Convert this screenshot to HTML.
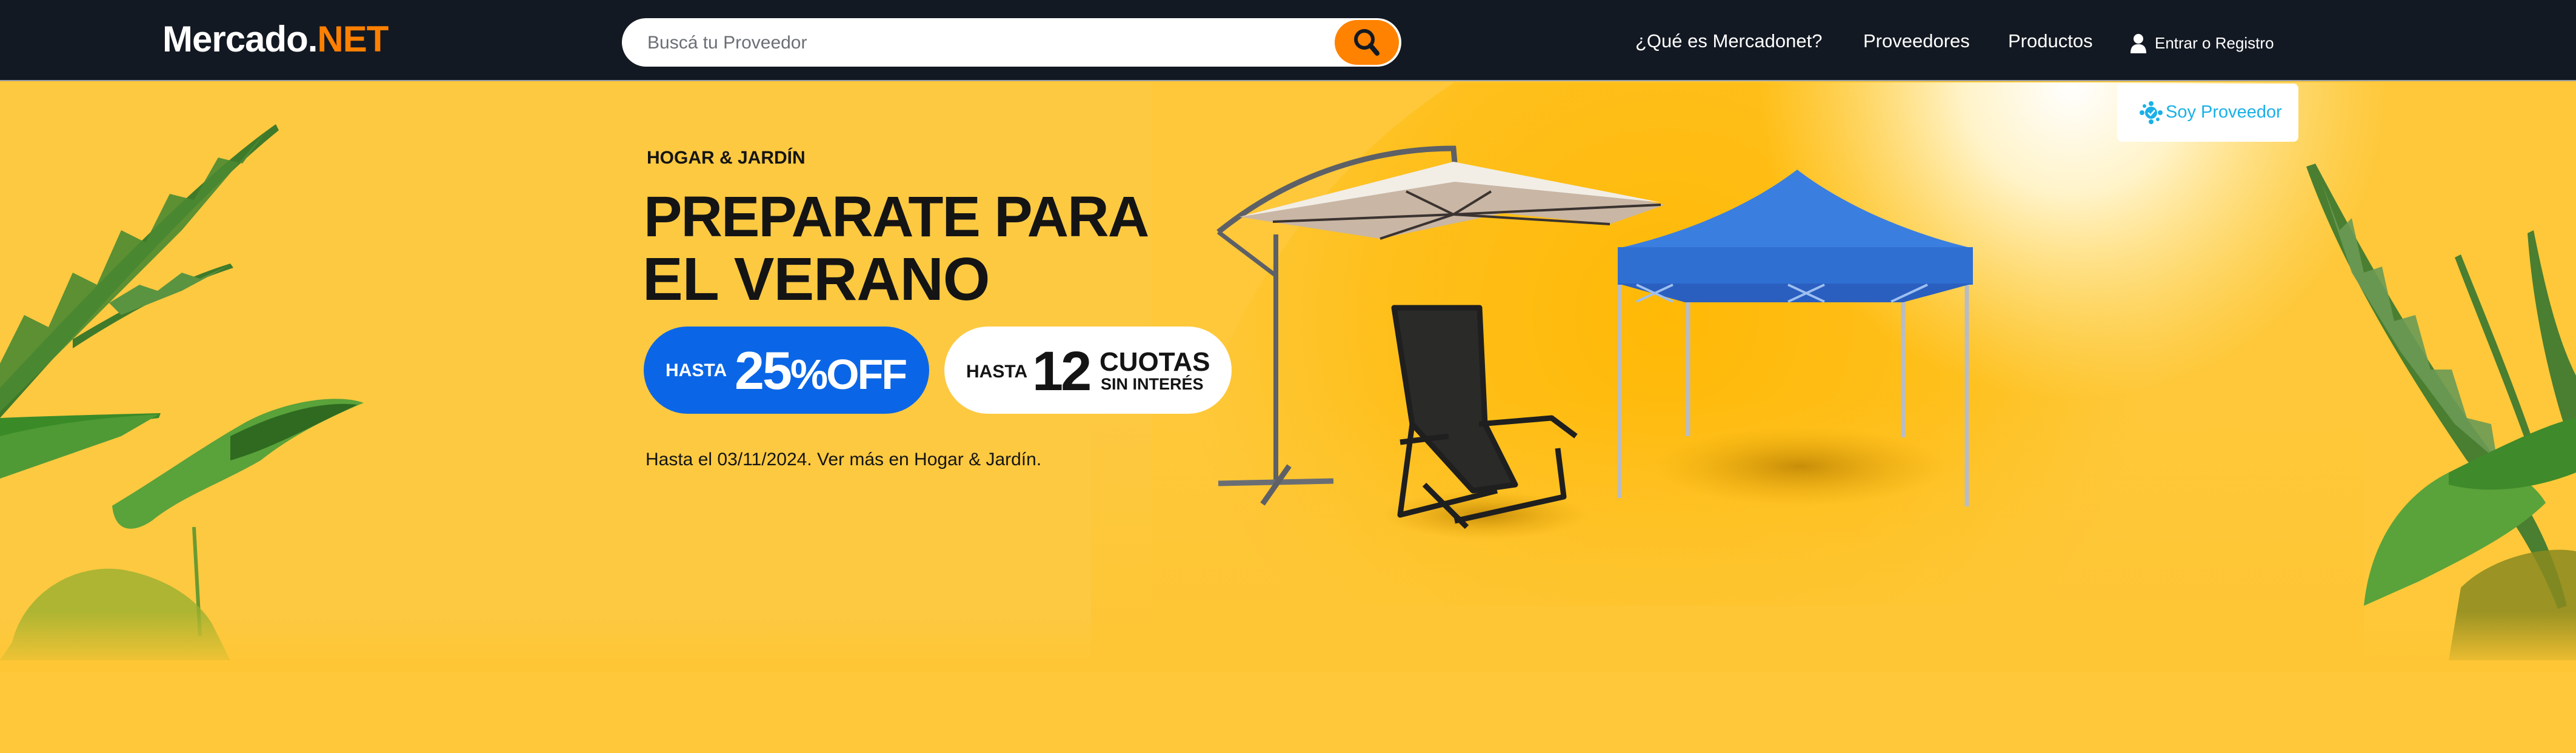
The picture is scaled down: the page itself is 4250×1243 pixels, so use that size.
<!DOCTYPE html>
<html><head><meta charset="utf-8"><style>
*{margin:0;padding:0;box-sizing:border-box}
body{width:4250px;height:1243px;overflow:hidden;background:#fec634;font-family:"Liberation Sans",sans-serif;position:relative}
.hdr{position:absolute;left:0;top:0;width:4250px;height:134px;background:#131922;border-bottom:2px solid #9aa0a6}
.logo{position:absolute;left:268px;top:30px;font-size:60px;font-weight:bold;color:#fff;letter-spacing:-1px}
.logo span{color:#ff8000}
.search{position:absolute;left:1026px;top:30px;width:1286px;height:80px;background:#fff;border-radius:40px}
.search .ph{position:absolute;left:42px;top:24px;font-size:30px;color:#6b6f75}
.search .btn{position:absolute;right:4px;top:3px;width:106px;height:74px;background:#ff8200;border-radius:37px}
.nav{position:absolute;top:50px;font-size:31px;color:#fff}
.ban{position:absolute;left:0;top:136px;width:4250px;height:1107px}
.t{position:absolute;color:#141414;font-weight:bold;white-space:nowrap}
.pill{position:absolute;top:539px;height:144px;border-radius:72px}
.soy{position:absolute;left:3493px;top:138px;width:299px;height:96px;background:#fff;border-radius:8px;color:#1ab0e8;font-size:29px}
</style></head><body>
<div class="ban">
<svg width="4250" height="1107" viewBox="0 136 4250 1107" style="position:absolute;left:0;top:0">
<defs>
<radialGradient id="g1" cx="2750" cy="520" r="800" gradientUnits="userSpaceOnUse"><stop offset="0" stop-color="#ffb700" stop-opacity=".9"/><stop offset=".6" stop-color="#ffba08" stop-opacity=".6"/><stop offset="1" stop-color="#ffbe10" stop-opacity="0"/></radialGradient>
<radialGradient id="g2" cx="3420" cy="140" r="520" gradientUnits="userSpaceOnUse"><stop offset="0" stop-color="#ffffff"/><stop offset=".35" stop-color="#fff3c8"/><stop offset="1" stop-color="#ffe58a" stop-opacity="0"/></radialGradient>
<radialGradient id="sh" cx="0.5" cy="0.5" r="0.5"><stop offset="0" stop-color="#b07800" stop-opacity=".7"/><stop offset="1" stop-color="#d89a00" stop-opacity="0"/></radialGradient>
<linearGradient id="fade" x1="0" y1="0" x2="0" y2="1"><stop offset="0" stop-color="#fec634" stop-opacity="0"/><stop offset="1" stop-color="#fec634"/></linearGradient>
<linearGradient id="vf" x1="0" y1="0" x2="0" y2="1"><stop offset="0" stop-color="#fec634" stop-opacity="0"/><stop offset=".55" stop-color="#fec634" stop-opacity="0"/><stop offset="1" stop-color="#fec634"/></linearGradient>
</defs>
<rect x="0" y="136" width="4250" height="1107" fill="#fec83a"/>
<rect x="0" y="136" width="1900" height="950" fill="#fdc941"/>
<path d="M1900 1000 C1950 650 2100 330 2400 136 L3700 136 C3800 400 3800 700 3700 1000 Z" fill="url(#g1)"/>
<rect x="1800" y="136" width="2100" height="950" fill="url(#vf)"/>
<rect x="2800" y="136" width="1300" height="900" fill="url(#g2)"/>
<!-- left plants -->
<g fill="#3f7a2a">
<path d="M0 640 C150 480 320 300 455 205 L460 215 C330 320 170 500 0 690 Z"/>
<path d="M0 600 L40 520 L80 540 L120 450 L160 470 L200 380 L240 400 L280 320 L320 330 L360 260 L400 270 L440 215 L300 380 L200 480 L100 580 L0 680Z" fill="#4a8a32" opacity=".9"/>
<path d="M120 560 C220 500 300 460 380 435 L385 442 C300 470 220 510 120 575Z"/>
<path d="M180 500 L230 470 L260 480 L300 450 L330 460 L380 437 L300 480 L200 520Z" fill="#5a9440"/>
<path d="M0 690 C100 686 180 684 265 682 L262 690 C180 700 90 720 0 740Z" fill="#3a8a28"/>
<path d="M0 720 C80 700 160 690 262 684 L200 720 L0 790Z" fill="#4f9a35"/>
</g>
<path d="M185 835 C260 790 330 740 400 700 C470 660 560 650 600 665 C540 690 480 720 430 760 C360 800 300 820 250 860 C220 880 190 880 185 835Z" fill="#5aa23a"/>
<path d="M380 720 C440 690 520 660 590 668 C520 700 450 740 380 760Z" fill="#2f6a20"/>
<path d="M320 870 L330 1050" stroke="#6a9a30" stroke-width="6"/>
<path d="M20 1060 C40 980 120 930 200 940 C260 950 320 980 350 1030 L380 1090 L0 1090Z" fill="#9ab030" opacity=".8"/>
<!-- right plants -->
<g fill="#4a7e30">
<path d="M3820 270 C3900 420 4000 600 4120 760 C4170 830 4210 900 4235 1000 L4220 1005 C4180 900 4120 820 4070 760 C3960 600 3860 430 3805 275Z"/>
<path d="M3830 300 L3860 380 L3880 360 L3900 450 L3930 440 L3950 530 L3985 520 L4010 610 L4045 610 L4070 690 L4110 700 L4120 760 L4050 700 L3960 580 L3880 450Z" fill="#6a9a55" opacity=".9"/>
<path d="M4060 420 C4100 520 4150 640 4190 760 L4180 765 C4140 650 4090 530 4050 425Z"/>
<path d="M4180 380 C4200 480 4220 560 4250 620 L4250 760 C4210 650 4180 520 4170 385Z"/>
</g>
<path d="M3900 1000 C3910 900 3960 820 4040 780 C4110 760 4170 780 4200 830 C4150 880 4070 920 3990 960 Z" fill="#5aa23a"/>
<path d="M4040 780 C4120 740 4200 700 4250 690 L4250 780 C4200 800 4120 820 4040 800Z" fill="#3f8a2a"/>
<path d="M4060 970 C4110 920 4200 900 4250 910 L4250 1090 L4040 1090Z" fill="#8a8a20" opacity=".85"/>
<rect x="0" y="1010" width="4250" height="100" fill="url(#fade)"/>
<!-- shadows -->
<ellipse cx="2970" cy="770" rx="240" ry="65" fill="url(#sh)"/>
<ellipse cx="2450" cy="850" rx="170" ry="40" fill="url(#sh)"/>
<!-- umbrella -->
<path d="M2010 383 C2150 270 2300 245 2398 245 L2400 268" stroke="#5d6066" stroke-width="9" fill="none"/>
<path d="M2010 383 L2105 455" stroke="#5d6066" stroke-width="7"/>
<path d="M2105 387 L2105 800" stroke="#5d6066" stroke-width="8"/>
<path d="M2010 798 L2200 794" stroke="#6a6e74" stroke-width="9"/>
<path d="M2083 832 L2127 769" stroke="#5d6066" stroke-width="9"/>
<path d="M2045 358 L2398 267 L2747 338 L2656 370 L2480 352 L2277 394 Z" fill="#c9b6a4"/>
<path d="M2045 358 L2398 267 L2740 334 L2400 300 Z" fill="#f2eee6"/>
<g stroke="#3a3330" stroke-width="4"><path d="M2398 354 L2277 394"/><path d="M2398 354 L2656 370"/><path d="M2398 354 L2100 366"/><path d="M2398 354 L2740 338"/><path d="M2398 354 L2320 316"/><path d="M2398 354 L2460 316"/></g>
<!-- chair -->
<g stroke="#1f1f1f" stroke-width="9" fill="none" stroke-linejoin="round">
<path d="M2300 508 L2441 508 L2450 700 L2500 800 L2430 810 L2330 700 Z" fill="#2a2a28"/>
<path d="M2330 700 L2310 850 L2470 810"/>
<path d="M2440 700 L2560 690 L2600 720"/>
<path d="M2310 730 L2390 720"/>
<path d="M2400 860 L2580 820 L2570 740"/>
<path d="M2350 800 L2420 870"/>
</g>
<!-- tent -->
<g stroke="#b8bcc4" stroke-width="7"><path d="M2672 470 L2672 822"/><path d="M2785 480 L2785 720"/><path d="M3140 480 L3140 722"/><path d="M3245 470 L3245 836"/></g>
<path d="M2669 410 C2800 380 2900 330 2965 280 C3030 330 3130 380 3255 410 Z" fill="#3a7ee0"/>
<rect x="2669" y="408" width="586" height="62" fill="#2f6fd2"/>
<path d="M2669 468 L3255 468 L3140 499 L2780 499 Z" fill="#2a5fc0"/>
<path d="M2700 470 L2760 498 M2760 470 L2700 498 M2950 470 L3010 498 M3010 470 L2950 498 M3180 470 L3120 498" stroke="#9ec0f0" stroke-width="4"/>
</svg>
<div class="t" style="left:1067px;top:108px;font-size:30px">HOGAR &amp; JARDÍN</div>
<div class="t" style="left:1062px;top:168px;font-size:95px;letter-spacing:-2px">PREPARATE PARA</div>
<div class="t" style="left:1060px;top:268px;font-size:100px;font-weight:900;letter-spacing:-1px">EL VERANO</div>
<div class="pill" style="left:1062px;width:471px;background:#0a66e6;top:403px">
<span style="position:absolute;left:36px;top:56px;color:#fff;font-size:30px;font-weight:bold">HASTA</span>
<span style="position:absolute;left:150px;top:22px;color:#fff;font-size:88px;font-weight:bold;letter-spacing:-3px">25<span style="font-size:70px">%OFF</span></span></div>
<div class="pill" style="left:1558px;width:474px;background:#fff;top:403px">
<span style="position:absolute;left:36px;top:58px;color:#141414;font-size:30px;font-weight:bold">HASTA</span>
<span style="position:absolute;left:145px;top:22px;color:#141414;font-size:92px;font-weight:bold;letter-spacing:-4px">12</span>
<span style="position:absolute;left:256px;top:34px;color:#141414;font-size:44px;font-weight:bold">CUOTAS</span>
<span style="position:absolute;left:258px;top:80px;color:#141414;font-size:27px;font-weight:bold">SIN INTERÉS</span></div>
<div class="t" style="left:1065px;top:606px;font-size:30px;font-weight:normal">Hasta el 03/11/2024. Ver más en Hogar &amp; Jardín.</div>
</div>
<div class="soy"><svg width="40" height="40" viewBox="0 0 40 40" style="position:absolute;left:36px;top:28px"><circle cx="20" cy="20" r="10" fill="#1ab0e8"/><circle cx="20" cy="5" r="4" fill="#1ab0e8"/><circle cx="20" cy="35" r="4" fill="#1ab0e8"/><circle cx="5" cy="20" r="4" fill="#1ab0e8"/><circle cx="35" cy="20" r="4" fill="#1ab0e8"/><circle cx="9" cy="9" r="3" fill="#1ab0e8"/><circle cx="31" cy="31" r="3" fill="#1ab0e8"/><path d="M15 20 L19 24 L26 16" stroke="#fff" stroke-width="2.5" fill="none"/></svg><span style="position:absolute;left:80px;top:31px">Soy Proveedor</span></div>
<div class="hdr">
<div class="logo">Mercado.<span>NET</span></div>
<div class="search"><span class="ph">Buscá tu Proveedor</span><div class="btn"><svg width="106" height="74" viewBox="0 0 106 74"><circle cx="49" cy="32" r="14" stroke="#131922" stroke-width="6" fill="none"/><path d="M59 42 L70 55" stroke="#131922" stroke-width="8" stroke-linecap="round"/></svg></div></div>
<div class="nav" style="left:2698px">¿Qué es Mercadonet?</div>
<div class="nav" style="left:3074px">Proveedores</div>
<div class="nav" style="left:3313px">Productos</div>
<svg width="26" height="32" viewBox="0 0 26 32" style="position:absolute;left:3515px;top:56px"><circle cx="13" cy="8" r="8" fill="#fff"/><path d="M0 32 C0 20 6 17 13 17 C20 17 26 20 26 32Z" fill="#fff"/></svg>
<div class="nav" style="left:3555px;top:56px;font-size:26px">Entrar o Registro</div>
</div>
</body></html>
